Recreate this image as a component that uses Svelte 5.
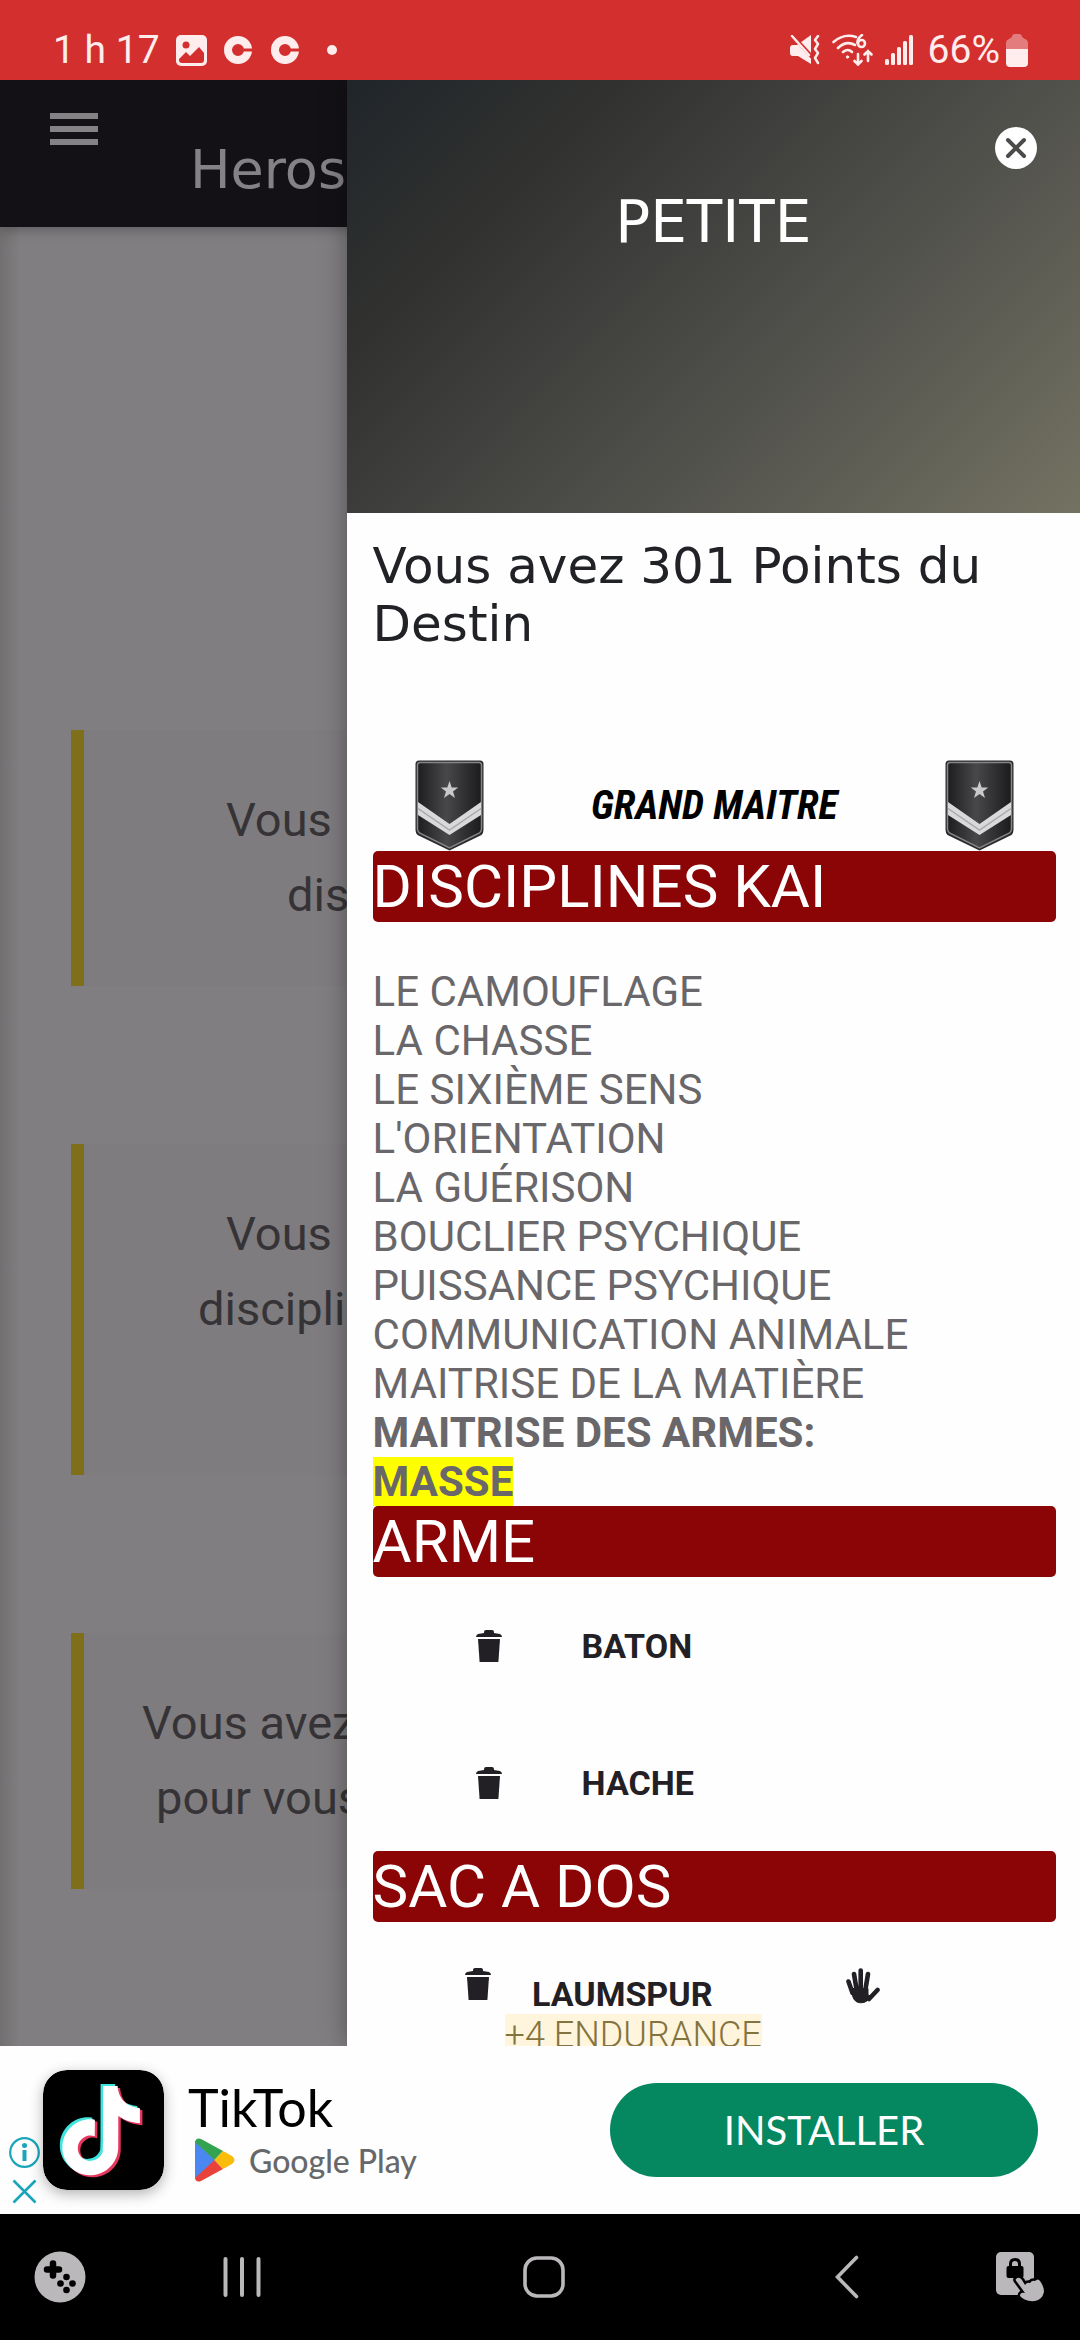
<script>
	const cards = [
		{ rows: 2, lines: [{ text: 'Vous', indent: 142 }, { text: 'dis', indent: 203 }] },
		{ rows: 3, lines: [{ text: 'Vous', indent: 142 }, { text: 'discipli', indent: 114 }] },
		{ rows: 2, lines: [{ text: 'Vous avez', indent: 58 }, { text: 'pour vous', indent: 72 }] }
	];

	const disciplines = [
		'LE CAMOUFLAGE',
		'LA CHASSE',
		'LE SIXIÈME SENS',
		"L'ORIENTATION",
		'LA GUÉRISON',
		'BOUCLIER PSYCHIQUE',
		'PUISSANCE PSYCHIQUE',
		'COMMUNICATION ANIMALE',
		'MAITRISE DE LA MATIÈRE'
	];

	let weapons = $state(['BATON', 'HACHE']);
	let bag = $state([{ name: 'LAUMSPUR', effect: '+4 ENDURANCE' }]);
	let open = $state(true);

	const note = 'M12.525.02c1.31-.02 2.61-.01 3.91-.02.08 1.53.63 3.09 1.75 4.17 1.12 1.11 2.7 1.62 4.24 1.79v4.03c-1.44-.05-2.89-.35-4.2-.97-.57-.26-1.1-.59-1.62-.93-.01 2.92.01 5.84-.02 8.75-.08 1.4-.54 2.79-1.35 3.94-1.31 1.92-3.58 3.17-5.91 3.21-1.43.08-2.86-.31-4.08-1.03-2.02-1.19-3.44-3.37-3.65-5.71-.02-.5-.03-1-.01-1.49.18-1.9 1.12-3.72 2.58-4.96 1.66-1.44 3.98-2.13 6.15-1.72.02 1.48-.04 2.96-.04 4.44-.99-.32-2.15-.23-3.02.37-.63.41-1.11 1.04-1.36 1.75-.21.51-.15 1.07-.14 1.61.24 1.64 1.82 3.02 3.5 2.87 1.12-.01 2.19-.66 2.77-1.61.19-.33.4-.67.41-1.06.1-1.79.06-3.57.07-5.36.01-4.03-.01-8.05.02-12.07z';
</script>

{#snippet trash()}
	<svg width="26" height="32" viewBox="0 0 26 32" fill="#222024">
		<path d="M8 2q0-2 2-2h6q2 0 2 2v1l6 1q2 1 2 3H0q0-2 2-3l6-1z" />
		<path d="M2 9h22l-1.6 23H3.6z" />
	</svg>
{/snippet}

{#snippet badge()}
	<svg width="69" height="91" viewBox="0 0 69 91">
		<defs>
			<linearGradient id="shield" x1="0" x2="1">
				<stop offset="0" stop-color="#1d1d1f" />
				<stop offset="0.45" stop-color="#48484b" />
				<stop offset="1" stop-color="#1b1b1d" />
			</linearGradient>
		</defs>
		<path d="M4 0.5h61q3.5 0 3.5 3.5v66q0 3-2 5L34.5 90.5 2.5 75q-2-2-2-5V4q0-3.5 3.5-3.5z" fill="#2b2b2d" />
		<path d="M5 2.5h59q2.5 0 2.5 2.5v64q0 2-2 4L34.5 88 4.5 73q-2-2-2-4V5q0-2.5 2.5-2.5z" fill="url(#shield)" stroke="#858588" stroke-width="1.5" />
		<path d="M3 42l31.5 22L66 42v13L34.5 75 3 55z" fill="#d9d9db" />
		<path d="M3 48.5l31.5 21.5L66 48.5" fill="none" stroke="#a9a9ac" stroke-width="1.5" />
		<path d="M34.5 21l2.2 6.4h6.5l-5.2 4 2 6.6-5.5-4-5.5 4 2-6.6-5.2-4h6.5z" fill="#c9c9cb" />
	</svg>
{/snippet}

<div class="screen">
	<header class="status">
		<span class="time">1 h 17</span>
		<svg class="picture" width="31" height="31" viewBox="0 0 31 31">
			<rect width="31" height="31" rx="5" fill="#ffecec" />
			<circle cx="10" cy="10" r="3.5" fill="#d32f2f" />
			<path d="M3 24l7-7 4 4 9-9 5 6v7q0 3-3 3H6q-3 0-3-3z" fill="#d32f2f" />
		</svg>
		{#each [0, 1] as n (n)}
			<svg class="ring" width="29" height="28" viewBox="0 0 29 28">
				<circle cx="14" cy="14" r="10" fill="none" stroke="#ffecec" stroke-width="8" />
				<path d="M17 14h12" stroke="#d32f2f" stroke-width="3" />
			</svg>
		{/each}
		<i class="dot"></i>
		<div class="system">
			<svg width="30" height="30" viewBox="0 0 30 30">
				<path d="M0 13q0-3 3-3h4l14-10v29L8 21H3q-3 0-3-3z" fill="#ffecec" />
				<path d="M1-1l22 24" stroke="#d32f2f" stroke-width="4" />
				<path d="M2 1l17 19" stroke="#ffecec" stroke-width="2.5" stroke-linecap="round" />
				<path d="M28 1l-3 4 3 4-3 5 3 4-3 5 3 5" fill="none" stroke="#ffecec" stroke-width="2.5" stroke-linecap="round" stroke-linejoin="round" />
			</svg>
			<svg width="41" height="32" viewBox="0 0 41 32" fill="none" stroke="#ffecec" stroke-width="2.6" stroke-linecap="round">
				<path d="M1.5 8Q12-1 24 3M6 14q8-8 17-3M11 18q5-4 9 0" />
				<circle cx="15.5" cy="23" r="1.2" fill="#ffecec" stroke-width="1" />
				<path d="M30 1q-5 4-4.5 8" />
				<circle cx="29.5" cy="9.5" r="3.5" />
				<path d="M26 20v10M22.5 27l3.5 3.5 3.5-3.5M36 27V17M32.5 20.5L36 17l3.5 3.5" />
			</svg>
			<svg width="29" height="30" viewBox="0 0 29 30" fill="#ffecec">
				<rect y="24" width="4" height="6" rx="1.5" />
				<rect x="6" y="18" width="4" height="12" rx="1.5" />
				<rect x="12" y="12" width="4" height="18" rx="1.5" />
				<rect x="18" y="6" width="4" height="24" rx="1.5" />
				<rect x="24" width="4" height="30" rx="1.5" />
			</svg>
			<span class="percent">66%</span>
			<svg width="22" height="33" viewBox="0 0 22 33">
				<path d="M6 3q0-3 3-3h4q3 0 3 3l3 2q3 1 3 4v6H0V9q0-3 3-4z" fill="#e37c7c" />
				<path d="M0 15h22v14q0 4-4 4H4q-4 0-4-4z" fill="#ffecec" />
			</svg>
		</div>
	</header>

	<main>
		<div class="page">
			<div class="topbar">
				<button class="menu" aria-label="Menu" onclick={() => (open = true)}>
					<i></i><i></i><i></i>
				</button>
				<h1>Heros</h1>
			</div>
			<div class="cards">
				{#each cards as card}
					<p class="card" style:--rows={card.rows}>
						{#each card.lines as line}
							<span style:padding-left="{line.indent}px">{line.text}</span>
						{/each}
					</p>
				{/each}
			</div>
		</div>

		{#if open}
			<aside>
				<div class="cover">
					<h2>PETITE</h2>
					<button class="close" aria-label="Fermer" onclick={() => (open = false)}>
						<svg width="42" height="42" viewBox="0 0 42 42">
							<circle cx="21" cy="21" r="21" fill="#fff" />
							<path d="M13 13l16 16M29 13L13 29" stroke="#4b4b49" stroke-width="4" stroke-linecap="round" />
						</svg>
					</button>
				</div>
				<div class="sheet">
					<h3>Vous avez 301 Points du Destin</h3>
					<div class="rank">
						{@render badge()}
						<em>GRAND MAITRE</em>
						{@render badge()}
					</div>
					<h4>DISCIPLINES KAI</h4>
					<ul class="disciplines">
						{#each disciplines as name}
							<li>{name}</li>
						{/each}
						<li><b>MAITRISE DES ARMES:</b></li>
						<li><b><mark>MASSE</mark></b></li>
					</ul>
					<h4>ARME</h4>
					<ul>
						{#each weapons as weapon, i}
							<li class="weapon">
								<button aria-label="Jeter {weapon}" onclick={() => weapons.splice(i, 1)}>{@render trash()}</button>
								<b>{weapon}</b>
							</li>
						{/each}
					</ul>
					<h4>SAC A DOS</h4>
					<ul>
						{#each bag as item, i}
							<li class="item">
								<button aria-label="Jeter {item.name}" onclick={() => bag.splice(i, 1)}>{@render trash()}</button>
								<div class="label">
									<b>{item.name}</b>
									<span>{item.effect}</span>
								</div>
								<button class="use" aria-label="Utiliser {item.name}">
									<svg width="35" height="37" viewBox="0 0 35 37" fill="none" stroke="#222024" stroke-width="4.6" stroke-linecap="round">
										<path d="M2.5 13.5L6.5 25M8 6l2.5 15M14.7 2.5V20M22 6l-2.5 15M31.5 22L23 31" />
										<path d="M6.5 20.5h15.5v6.5l3 1q-3.5 7-10.5 6.8Q6.5 34.5 6 24z" fill="#222024" stroke-width="1" />
									</svg>
								</button>
							</li>
						{/each}
					</ul>
				</div>
			</aside>
		{/if}
	</main>

	<section class="ad">
		<div class="choices">
			<button aria-label="Informations">
				<svg width="31" height="31" viewBox="0 0 31 31" fill="none" stroke="#1aa5b8">
					<circle cx="15.5" cy="15.5" r="14.3" stroke-width="2.2" />
					<path d="M15.5 13v11" stroke-width="4" />
					<circle cx="15.5" cy="8.5" r="2.5" fill="#1aa5b8" stroke="none" />
				</svg>
			</button>
			<button aria-label="Fermer la publicité">
				<svg width="25" height="25" viewBox="0 0 25 25">
					<path d="M1.5 1.5l22 22M23.5 1.5l-22 22" stroke="#1aa5b8" stroke-width="2.6" />
				</svg>
			</button>
		</div>
		<svg class="logo" width="121" height="120" viewBox="0 0 121 120">
			<rect width="121" height="120" rx="24" fill="#000" />
			<path d={note} fill="#3ee4dd" transform="translate(11 14) scale(3.72)" />
			<path d={note} fill="#e9365f" transform="translate(16 18) scale(3.72)" />
			<path d={note} fill="#fff" transform="translate(13.5 16) scale(3.72)" />
		</svg>
		<div class="product">
			<strong>TikTok</strong>
			<span class="store">
				<svg width="41" height="44" viewBox="0 0 41 44">
					<path d="M1 3v38l20-19z" fill="#4a87f0" />
					<path d="M1 4Q2-1 7 1l22 12-8.5 9z" fill="#34a350" />
					<path d="M1 40q1 5 6 3l22-12-8.5-9z" fill="#e8423a" />
					<path d="M29 13l9 5q5 4 0 8l-9 5-8.5-9z" fill="#f9bc0a" />
				</svg>
				Google Play
			</span>
		</div>
		<button class="install">INSTALLER</button>
	</section>

	<nav>
		<button aria-label="Jeux">
			<svg width="52" height="52" viewBox="0 0 52 52">
				<circle cx="26" cy="26" r="25.5" fill="#bab8ba" />
				<path d="M19 12.5v12M13 18.5h12" stroke="#000" stroke-width="6.5" stroke-linecap="round" />
				<circle cx="32.5" cy="26" r="3.3" />
				<circle cx="26.5" cy="32.5" r="3.3" />
				<circle cx="38.5" cy="32.5" r="3.3" />
				<circle cx="32.5" cy="39" r="3.3" />
			</svg>
		</button>
		<button aria-label="Applications récentes">
			<svg width="38" height="42" viewBox="0 0 38 42">
				<path d="M2.5 3v36M19 3v36M35.5 3v36" stroke="#bab8ba" stroke-width="4" stroke-linecap="round" />
			</svg>
		</button>
		<button aria-label="Accueil">
			<svg width="42" height="42" viewBox="0 0 42 42">
				<rect x="2" y="2" width="38" height="38" rx="12" fill="none" stroke="#bab8ba" stroke-width="3.6" />
			</svg>
		</button>
		<button aria-label="Retour">
			<svg width="24" height="44" viewBox="0 0 24 44">
				<path d="M21.5 2.5L2.5 22l19 19.5" fill="none" stroke="#bab8ba" stroke-width="3.6" stroke-linecap="round" />
			</svg>
		</button>
		<button aria-label="Verrouiller l'écran">
			<svg width="49" height="50" viewBox="0 0 49 50" fill="#bab8ba">
				<rect width="38" height="43" rx="5" />
				<path d="M14.5 16v-4q0-4.5 4.5-4.5t4.5 4.5v4" fill="none" stroke="#000" stroke-width="3" />
				<rect x="10.5" y="14" width="17" height="12" rx="2" fill="#000" />
				<path d="M20 27q3-3 6 1l3 5q2-3 5-2 2-3 5-2 3-3 5 0 4 5 4 11-2 8-9 9-10 1-15-5 0-4 5-3l-8-11q-2-2-1-3z" stroke="#000" stroke-width="5" />
				<path d="M20 27q3-3 6 1l3 5q2-3 5-2 2-3 5-2 3-3 5 0 4 5 4 11-2 8-9 9-10 1-15-5 0-4 5-3l-8-11q-2-2-1-3z" />
			</svg>
		</button>
	</nav>
</div>

<style>
	:global(body) {
		margin: 0;
		background: #000;
	}
	.screen {
		display: flex;
		flex-direction: column;
		height: 100vh;
		font-family: Roboto, "Liberation Sans", sans-serif;
	}
	h1, h2, h3, h4, p, ul {
		margin: 0;
		padding: 0;
		font-weight: 400;
	}
	ul {
		list-style: none;
	}
	svg {
		display: block;
		flex: none;
	}
	button {
		padding: 0;
		border: 0;
		background: none;
		font: inherit;
		cursor: pointer;
	}

	/* status bar */
	.status {
		display: flex;
		align-items: center;
		height: 60px;
		padding: 20px 52px 0 53px;
		background: #d32f2f;
		color: #ffecec;
		font-size: 39px;
	}
	.picture {
		margin: 0 17px 0 16px;
	}
	.ring {
		margin-right: 18px;
	}
	.dot {
		width: 10px;
		height: 10px;
		margin-left: 9px;
		border-radius: 50%;
		background: #ffecec;
	}
	.system {
		display: flex;
		align-items: center;
		gap: 12px;
		margin-left: auto;
	}
	.percent {
		margin: 0 -6px 0 2px;
	}

	main {
		position: relative;
		flex: 1;
		min-height: 0;
		overflow: hidden;
		background: #807e80;
	}
	.page {
		height: 100%;
		background: linear-gradient(90deg, #716f70 0, #807e80 20px);
	}
	.topbar {
		display: flex;
		align-items: flex-start;
		height: 147px;
		background: #131115;
		box-shadow: 0 2px 12px rgba(0, 0, 0, 0.3);
	}
	.menu {
		display: grid;
		gap: 7px;
		margin: 33px 92px 0 50px;
	}
	.menu i {
		width: 48px;
		height: 6px;
		background: #848285;
	}
	h1 {
		margin-top: 58px;
		color: #848285;
		font-family: "DejaVu Sans", sans-serif;
		font-size: 54px;
		line-height: 64px;
	}
	.cards {
		display: grid;
		gap: 158px;
		padding: 503px 71px 0;
	}
	.card {
		height: calc(var(--rows) * 75px);
		padding: 52px 0 54px;
		border-left: 13px solid #806f1a;
		background: #7e7c7e;
		color: #363337;
		font-size: 47px;
		line-height: 75px;
	}
	.card span {
		display: block;
		white-space: nowrap;
	}

	/* drawer */
	aside {
		position: absolute;
		top: 0;
		right: 0;
		bottom: 0;
		width: calc(68% - 1px);
		overflow: hidden;
		background: #fefefe;
		box-shadow: 0 0 24px rgba(0, 0, 0, 0.35);
	}
	.cover {
		position: relative;
		display: grid;
		justify-content: center;
		align-items: start;
		height: 433px;
		background: linear-gradient(135deg, #20252a 0%, #30312f 22%, #4b4b48 55%, #737262 100%);
	}
	h2 {
		margin-top: 109px;
		color: #fff;
		font-family: "DejaVu Sans", sans-serif;
		font-size: 58px;
		line-height: 66px;
	}
	.close {
		position: absolute;
		top: 47px;
		right: 43px;
	}
	.sheet {
		padding: 24px 24px 0 26px;
	}
	h3 {
		color: #202226;
		font-family: "DejaVu Sans", sans-serif;
		font-size: 50px;
		line-height: 58px;
	}
	.rank {
		display: flex;
		align-items: center;
		justify-content: space-between;
		margin-top: 107px;
		padding: 0 42px;
	}
	em {
		color: #000;
		font-family: "Liberation Sans Narrow", "Roboto Condensed", Roboto, sans-serif;
		font-size: 40px;
		font-weight: 700;
	}
	h4 {
		border-radius: 5px;
		background: #8b0406;
		color: #fff;
		font-size: 60px;
		line-height: 71px;
	}
	.disciplines {
		padding-top: 45px;
		color: #69676a;
		font-size: 42px;
		line-height: 49px;
	}
	mark {
		background: #ff0;
		color: inherit;
	}
	.weapon {
		display: flex;
		align-items: center;
		gap: 80px;
		height: 137px;
		padding-left: 103px;
		color: #222024;
		font-size: 34px;
	}
	.item {
		display: flex;
		align-items: flex-start;
		gap: 14px;
		padding: 46px 0 0 92px;
		color: #222024;
		font-size: 34px;
	}
	.label {
		display: grid;
		justify-items: center;
		padding-top: 6px;
		line-height: 40px;
	}
	.label b {
		margin-right: 22px;
	}
	.label span {
		background: #fff5dc;
		color: #83733f;
		font-size: 36px;
		font-weight: 300;
		line-height: 42px;
	}
	.use {
		margin-left: 70px;
	}

	/* ad banner */
	.ad {
		display: flex;
		align-items: center;
		height: 168px;
		padding-right: 42px;
		background: #fefefe;
		font-family: Lato, "Open Sans", sans-serif;
	}
	.choices {
		display: grid;
		gap: 11px;
		align-self: flex-end;
		justify-items: center;
		width: 43px;
		padding: 0 0 10px 5px;
		box-sizing: border-box;
	}
	.logo {
		border-radius: 24px;
		box-shadow: 0 4px 14px rgba(0, 0, 0, 0.3);
	}
	.product {
		display: grid;
		gap: 2px;
		margin-left: 24px;
	}
	strong {
		color: #000;
		font-size: 52px;
		font-weight: 400;
		line-height: 58px;
	}
	.store {
		display: flex;
		align-items: center;
		gap: 14px;
		padding-left: 6px;
		color: #67686a;
		font-size: 32px;
		font-weight: 500;
	}
	.install {
		width: 428px;
		height: 94px;
		margin-left: auto;
		border-radius: 47px;
		background: #05875f;
		color: #fff;
		font-size: 40px;
	}

	nav {
		display: grid;
		grid-template-columns: 57px 1fr 1fr 1fr 47px;
		align-items: center;
		justify-items: center;
		height: 126px;
		padding: 0 35px 0 34px;
		background: #000;
	}
	nav button:first-child {
		justify-self: start;
	}
	nav button:last-child {
		justify-self: end;
	}
</style>
